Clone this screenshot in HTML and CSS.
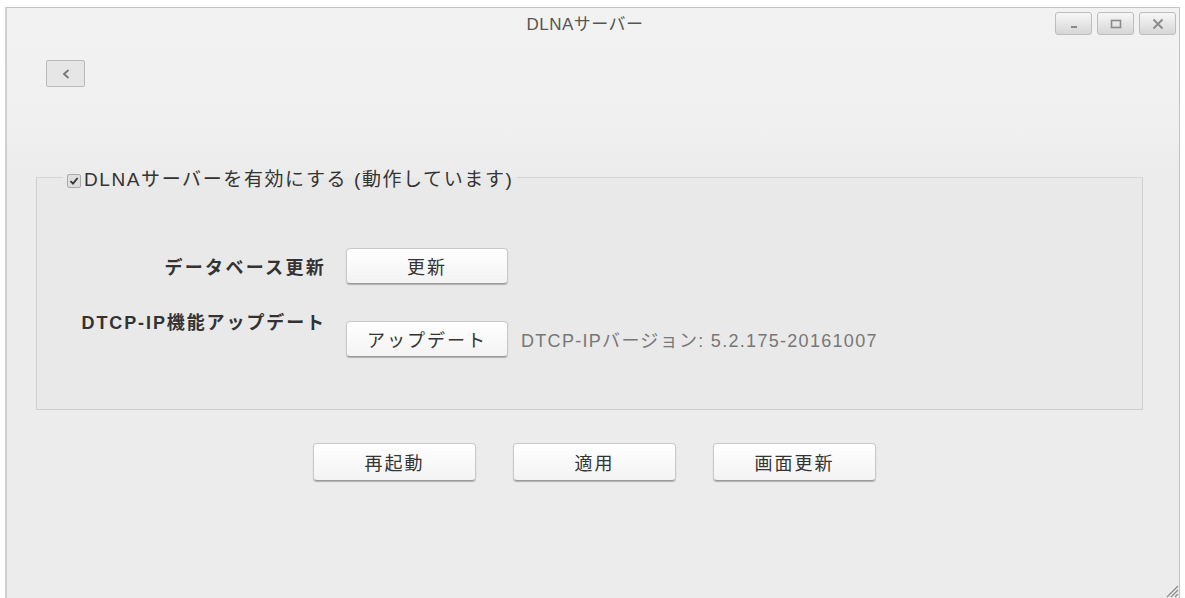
FILE: index.html
```html
<!DOCTYPE html>
<html lang="ja">
<head>
  <meta charset="UTF-8">
  <title>DLNAサーバー</title>
  <link rel="stylesheet" href="styles.css">
</head>
<body>
  <div class="window">
    <div class="titlebar">
      <div></div>
      <div class="title">DLNAサーバー</div>
      <div class="controls">
        <span class="ctrl">
          <svg width="12" height="12" viewBox="0 0 12 12"><rect x="3" y="8" width="6" height="2" fill="#8a8a8a"/></svg>
        </span>
        <span class="ctrl">
          <svg width="12" height="12" viewBox="0 0 12 12"><rect x="1.5" y="2.5" width="9" height="7" fill="none" stroke="#8a8a8a" stroke-width="1.6"/></svg>
        </span>
        <span class="ctrl">
          <svg width="12" height="12" viewBox="0 0 12 12"><path d="M1.5 1.5 L10.5 10.5 M10.5 1.5 L1.5 10.5" stroke="#8a8a8a" stroke-width="1.8"/></svg>
        </span>
      </div>
    </div>

    <div class="toolbar">
      <button class="back-btn">
        <svg width="10" height="12" viewBox="0 0 10 12"><path d="M7.5 2 L3 6 L7.5 10" fill="none" stroke="#777" stroke-width="1.8"/></svg>
      </button>
    </div>

    <fieldset class="group">
      <legend><span class="check"><svg width="10" height="10" viewBox="0 0 10 10"><path d="M1.5 5.2 L4 7.6 L8.6 2" fill="none" stroke="#333" stroke-width="1.8"/></svg></span>DLNAサーバーを有効にする (動作しています)</legend>

      <div class="rows">
        <div class="label">データベース更新</div>
        <button class="btn">更新</button>
        <div></div>

        <div class="label top">DTCP-IP機能アップデート</div>
        <button class="btn">アップデート</button>
        <div class="version">DTCP-IPバージョン: 5.2.175-20161007</div>
      </div>
    </fieldset>

    <div class="actions">
      <button class="btn wide">再起動</button>
      <button class="btn wide">適用</button>
      <button class="btn wide">画面更新</button>
    </div>

    <svg class="grip" width="16" height="16" viewBox="0 0 16 16">
      <path d="M15 4 L4 15 M15 8 L8 15 M15 12 L12 15" stroke="#8c8c8c" stroke-width="1.3"/>
    </svg>
  </div>
</body>
</html>
```

FILE: styles.css
```css
body {
  margin: 0;
  background-color: #fff;
  font-family: "Liberation Sans", "Noto Sans CJK JP", sans-serif;
  color: #333;
}

.window {
  position: relative;
  margin: 7px 5px 0 5px;
  height: 591px;
  border: 1px solid #c4c4c4;
  border-left: 2px solid #cfcfcf;
  border-bottom: none;
  background: linear-gradient(#f2f2f2 0, #f0f0f0 120px, #ececec 160px, #ececec 100%);
  box-sizing: border-box;
}

.titlebar {
  display: grid;
  grid-template-columns: 1fr auto 1fr;
  align-items: start;
  height: 40px;
}

.title {
  padding: 2px 16px 0 0;
  font-size: 17px;
  color: #555;
  letter-spacing: 0.5px;
}

.controls {
  display: flex;
  justify-content: flex-end;
  gap: 5px;
  padding: 4px 3px 0 0;
}

.ctrl {
  display: flex;
  align-items: center;
  justify-content: center;
  width: 37px;
  height: 23px;
  border: 1px solid #bdbdbd;
  border-radius: 3px;
  background: linear-gradient(#f7f7f7, #d6d6d6);
  box-sizing: border-box;
}

.toolbar {
  padding: 12px 0 0 39px;
  height: 88px;
}

.back-btn {
  display: flex;
  align-items: center;
  justify-content: center;
  width: 39px;
  height: 27px;
  padding: 0;
  border: 1px solid #b9b9b9;
  border-radius: 2px;
  background: #e6e6e6;
}

.group {
  margin: 16px 36px 0 29px;
  padding: 0;
  border: 1px solid #cfcfcf;
  border-top-color: #d6d6d6;
  background-color: #e9e9e9;
  height: 246px;
  box-sizing: border-box;
}

.group legend {
  margin-left: 26px;
  padding: 0 4px;
  font-size: 19px;
  color: #333;
  letter-spacing: 1.6px;
}

.check {
  display: inline-flex;
  align-items: center;
  justify-content: center;
  width: 12px;
  height: 12px;
  margin-right: 3px;
  border: 1px solid #aaa;
  border-radius: 2px;
  background: #dedede;
  vertical-align: 0;
}

.rows {
  display: grid;
  grid-template-columns: 286px 162px auto;
  column-gap: 23px;
  row-gap: 37px;
  align-items: center;
  margin-top: 57px;
}

.label {
  margin-right: -3px;
  text-align: right;
  font-size: 18px;
  font-weight: bold;
  color: #333;
  letter-spacing: 2.3px;
}

.label.top {
  align-self: start;
  margin-top: -13px;
  letter-spacing: 1.9px;
}

.version {
  margin-left: -10px;
  font-size: 18px;
  color: #777;
  letter-spacing: 1.3px;
}

.btn {
  height: 36px;
  padding: 0;
  border: 1px solid #c9c9c9;
  border-bottom-color: #9a9a9a;
  border-radius: 4px;
  background: linear-gradient(#ffffff, #f3f3f3);
  box-shadow: 0 1px 1px rgba(0,0,0,0.25);
  font-family: "Liberation Sans", "Noto Sans CJK JP", sans-serif;
  font-size: 18px;
  letter-spacing: 2px;
  color: #333;
}

.actions {
  display: flex;
  justify-content: center;
  gap: 37px;
  margin-top: 33px;
  padding-left: 3px;
}

.btn.wide {
  width: 163px;
  height: 38px;
}

.grip {
  position: absolute;
  right: 0;
  bottom: 0;
}
```
